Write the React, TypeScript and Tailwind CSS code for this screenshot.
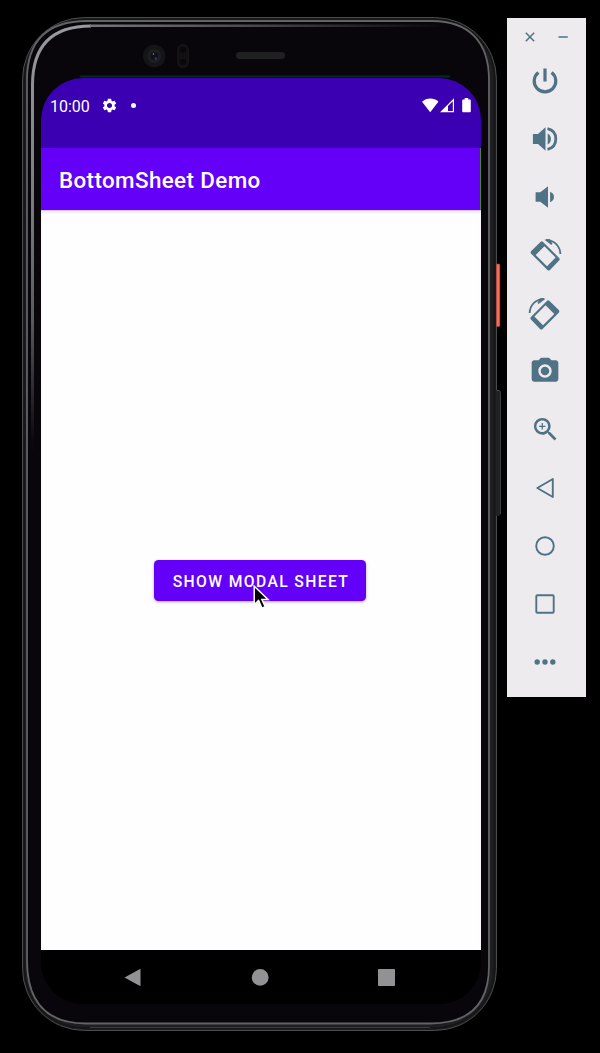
import type { ReactNode } from "react";
import { MdCameraAlt, MdSettings, MdZoomIn } from "react-icons/md";

function Bezel() {
  return (
    <svg className="absolute inset-0" width="480" height="1016" viewBox="22 17 480 1016" fill="none" aria-hidden="true">
      <defs>
        <linearGradient id="fade" x1="0" y1="17" x2="0" y2="1031" gradientUnits="userSpaceOnUse">
          <stop offset="0" stopColor="#9a9c9e" />
          <stop offset="0.2" stopColor="#77787a" />
          <stop offset="0.3" stopColor="#5a5a5c" />
          <stop offset="0.42" stopColor="#0b070c" />
        </linearGradient>
        <linearGradient id="topFade" x1="90" y1="0" x2="440" y2="0" gradientUnits="userSpaceOnUse">
          <stop offset="0" stopColor="#777879" />
          <stop offset="0.45" stopColor="#4c4a4c" />
          <stop offset="1" stopColor="#0a080c" />
        </linearGradient>
      </defs>
      <rect x="22.5" y="17.5" width="474" height="1013" rx="62" fill="#1e1e20" stroke="#4a4b4d" />
      <rect x="24.5" y="19.5" width="470" height="1008.5" rx="60" stroke="#151517" strokeWidth="1.5" />
      <path d="M27 960V80Q27 21 87 21H432C468 21 489 41 489 80V966Q489 1023.5 430 1023.5H86Q27 1023.5 27 960Z" fill="#09060b" stroke="#626365" strokeWidth="1.8" />
      <path d="M32.5 450V85Q32.5 26 91 26" stroke="url(#fade)" strokeWidth="3" />
      <path d="M90 25.8H440" stroke="url(#topFade)" strokeWidth="2.6" />
      <path d="M90 1027.5H430" stroke="#3c3c3f" />
      <path d="M80 76.5H450" stroke="#062b1c" strokeWidth="2" />
      <circle cx="154.3" cy="56" r="11.3" fill="#151417" />
      <circle cx="154.3" cy="56" r="7" fill="#1d1e21" />
      <circle cx="154.3" cy="56" r="3.8" fill="#101116" />
      <circle cx="153.5" cy="54" r="0.8" fill="#8b8d92" />
      <circle cx="155.8" cy="58.5" r="1.2" fill="#363c60" />
      <rect x="177.8" y="44.5" width="10.5" height="23" rx="5.2" fill="#111013" stroke="#19181b" />
      <circle cx="183" cy="49.7" r="3" fill="#08070a" />
      <circle cx="183" cy="62" r="3" fill="#08070a" />
      <rect x="236" y="52" width="49" height="7" rx="3.5" fill="#202022" />
      <rect x="496.5" y="264" width="3.3" height="62.5" rx="1" fill="#f0705c" stroke="#c43f30" strokeWidth="0.6" />
      <path d="M496 390H499.5Q500.5 391 500.5 393V514L499 516H496Z" fill="#222224" />
      <path d="M496.5 390.5H499.5Q500.5 392 500.5 394V514" stroke="#4a4b4e" strokeWidth="0.8" />
    </svg>
  );
}

function StatusBar() {
  return (
    <div className="flex h-[70px] items-start bg-[#3a00b2] pl-[9px] pr-[9.5px] pt-[19px] text-white">
      <span className="w-[51px] text-[16px] leading-[19px]">10:00</span>
      <MdSettings className="h-[17px] w-[17px]" />
      <span className="ml-[13px] mt-[6px] h-[5px] w-[5px] rounded-full bg-white" />
      <svg className="ml-auto mt-px" width="33" height="15" viewBox="0 0 33 15">
        <path d="M0 3.8C4-.4 12-.9 16.4 3.8L8.2 14.2Z" fill="#fff" />
        <path fillRule="evenodd" d="M32 .2V14.2H18ZM30.8 3.2L26 8V13H30.8Z" fill="#fff" />
      </svg>
      <svg className="ml-[7px] mt-px" width="10" height="15" viewBox="0 0 10 15" fill="#fff">
        <path d="M2.7 0H6.2V1.6H7.8Q8.8 1.6 8.8 2.6V13.2Q8.8 14.2 7.8 14.2H1.2Q.2 14.2 .2 13.2V2.6Q.2 1.6 1.2 1.6H2.7Z" />
      </svg>
    </div>
  );
}

function Pointer() {
  return (
    <svg className="absolute left-[99px] top-[25px]" width="20" height="28" viewBox="0 0 20 28" aria-hidden="true">
      <path d="M1.2 1.2V19.5L5.6 15.6L9 23.2L12.2 21.8L8.9 14.5H15Z" fill="#000" stroke="#fff" strokeWidth="1.5" />
    </svg>
  );
}

function NavBar() {
  return (
    <div className="flex h-[54px] shrink-0 items-center bg-black pl-[83px] pr-[85px]">
      <svg className="h-[19px] w-full" viewBox="0 0 272 19" fill="#929294">
        <path d="M16.5 .8V18.3L.5 9.5Z" />
        <circle cx="136.2" cy="9.4" r="8.4" />
        <rect x="254" y="1" width="17" height="17" rx="0.8" />
      </svg>
    </div>
  );
}

function Phone() {
  return (
    <div className="relative ml-[22px] mt-[17px] h-[1016px] w-[480px] shrink-0 pl-[19px] pt-[61px]">
      <Bezel />
      <div className="relative flex h-[926px] w-[440px] flex-col overflow-hidden rounded-[42px] bg-black">
        <StatusBar />
        <div className="flex h-[62px] shrink-0 items-center border-r border-[#46872c] bg-[#6400f7] pl-[18px] pt-[3px] text-[22.4px] font-medium tracking-[0.38px] text-white">
          BottomSheet Demo
        </div>
        <main className="flex flex-1 items-center justify-center border-t border-[#dcc6f7] bg-[#fefdff] pr-[2px] shadow-[inset_0_2px_2px_#eeeaf3]">
          <button className="relative h-[41px] w-[212px] whitespace-nowrap rounded-[4.5px] bg-[#6400f7] pl-[2px] pt-[3px] text-[15.7px] font-medium tracking-[1.37px] text-white shadow-[0_1px_3px_#aaa]">
            SHOW MODAL SHEET
            <Pointer />
          </button>
        </main>
        <NavBar />
      </div>
    </div>
  );
}

function Glyph({ children }: { children: ReactNode }) {
  return (
    <svg width="34" height="34" viewBox="-17 -17 34 34" fill="currentColor">
      {children}
    </svg>
  );
}

const speaker = "M-12.1 -5H-7L.5 -11.7V11.7L-7 5H-12.1Z";

function RotateShape() {
  return (
    <>
      <path
        fillRule="evenodd"
        d="M-4.5 -13.1Q-3.2 -14.3 -1.9 -13.1L14.1 2.9Q15.4 4.2 14.1 5.5L5 14.9Q3.7 16.1 2.4 14.9L-13.8 -1.3Q-15.1 -2.6 -13.8 -3.9ZM-.6 -8.7L-9.3 -.1L2 11.2L10.6 2.5Z"
      />
      <path d="M1 -15.1C9 -14.9 15 -9.5 15.4 -1" fill="none" stroke="currentColor" strokeWidth="1.8" />
      <path d="M-.6 -15.2L5 -15.8L7.5 -11.2L6.4 -9.9Z" />
    </>
  );
}

function Toolbar() {
  return (
    <aside className="ml-[5px] mt-[18px] flex h-[679px] w-[79px] shrink-0 flex-col items-center bg-[#edebee] text-[#4f7385]">
      <div className="flex h-[34px] w-full shrink-0 items-end pl-[17px]">
        <svg width="46" height="30" viewBox="0 0 46 30" stroke="currentColor" strokeWidth="1.5">
          <path d="M1.8 10.8L10.2 19.2M10.2 10.8L1.8 19.2M34.5 15H43.8" />
        </svg>
      </div>
      <div className="mt-[12px] flex flex-col items-center gap-[24.15px] pr-[2.5px]">
        <Glyph>
          <path d="M0 -12.6V.6M-6.6 -8.4A10.8 10.8 0 1 0 6.6 -8.4" fill="none" stroke="currentColor" strokeWidth="3.2" />
        </Glyph>
        <Glyph>
          <path d={speaker} />
          <path d="M2.7 -5.4Q5.9 -3.8 5.9 0T2.7 5.4Z" />
          <path d="M2.5 -10.3Q10.8 -8.5 10.8 0T2.5 10.3" fill="none" stroke="currentColor" strokeWidth="2.8" />
        </Glyph>
        <Glyph>
          <path d="M-9.4 -4.7H-4.7L3 -10.8V10.8L-4.7 4.7H-9.4ZM5.1 -5.2Q9 -3.6 9 0T5.1 5.2Z" />
        </Glyph>
        <Glyph>
          <RotateShape />
        </Glyph>
        <Glyph>
          <g transform="scale(-1 1)">
            <RotateShape />
          </g>
        </Glyph>
        <div className="flex h-[34px] w-[34px] items-center justify-center pb-px">
          <MdCameraAlt className="h-8 w-8" />
        </div>
        <div className="flex h-[34px] w-[34px] items-center justify-center">
          <MdZoomIn className="h-[31px] w-[31px]" />
        </div>
        <Glyph>
          <path d="M7.8 -9V9L-7.7 0Z" fill="none" stroke="currentColor" strokeWidth="1.9" strokeLinejoin="round" />
        </Glyph>
        <Glyph>
          <circle r="8.8" fill="none" stroke="currentColor" strokeWidth="1.9" />
        </Glyph>
        <Glyph>
          <rect x="-8.7" y="-8.7" width="17.4" height="17.4" rx="1" fill="none" stroke="currentColor" strokeWidth="1.9" />
        </Glyph>
        <Glyph>
          <circle cx="-7.8" r="2.7" />
          <circle r="2.7" />
          <circle cx="7.8" r="2.7" />
        </Glyph>
      </div>
    </aside>
  );
}

export default function App() {
  return (
    <div className="flex h-[1053px] w-[600px] items-start overflow-hidden bg-black font-['Roboto',sans-serif]">
      <Phone />
      <Toolbar />
    </div>
  );
}
